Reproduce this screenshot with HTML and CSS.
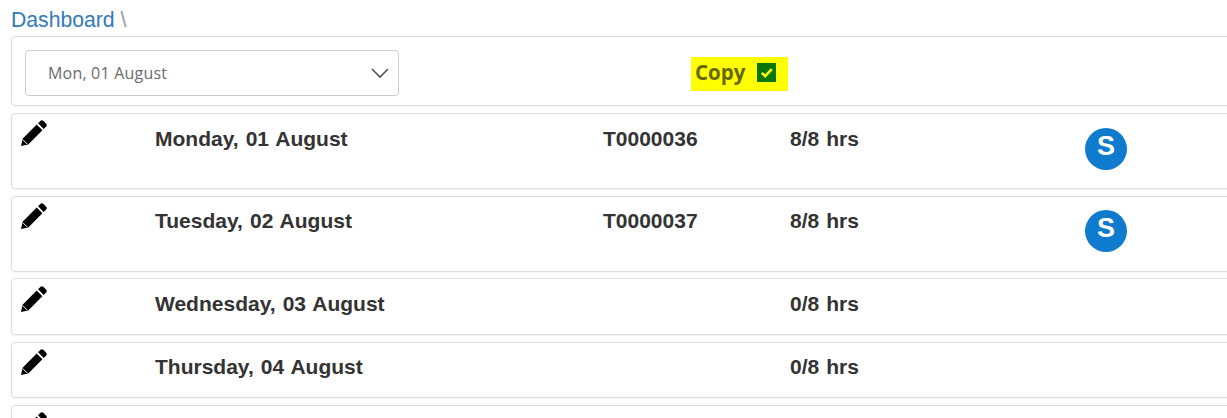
FILE: index.html
```html
<!DOCTYPE html>
<html lang="en">
<head>
    <meta charset="UTF-8">
    <title>Dashboard</title>
    <link rel="stylesheet" href="styles.css">
</head>
<body>
<div class="crumb"><a href="#">Dashboard</a> <span>\</span></div>

<div class="toolbar">
    <div class="select">
        <span>Mon, 01 August</span>
        <svg class="chevron" viewBox="0 0 18 11"><path d="M1 1l8 8 8-8" fill="none" stroke="#555" stroke-width="1.6"/></svg>
    </div>
    <div class="copy">
        <span>Copy</span>
        <span class="check"><svg viewBox="0 0 19 19"><path d="M4.8 9.8l3.4 3.4L14.8 6.2" fill="none" stroke="#ffff00" stroke-width="2.6"/></svg></span>
    </div>
</div>

<div class="row tall">
    <svg class="pencil" viewBox="0 0 26 26"><path d="M0 26l1.6-7.3L15.7 4.6l5.7 5.7L7.3 24.4zM17 3.3L19.6.8c.8-.8 1.9-.8 2.7 0l2.9 2.9c.8.8.8 1.9 0 2.7l-2.5 2.6z"/><path d="M1.8 19.6l4.6 4.6" stroke="#fff" stroke-width="1"/></svg>
    <div class="date">Monday, 01 August</div>
    <div class="task">T0000036</div>
    <div class="hours">8/8 hrs</div>
    <div class="avatar">S</div>
</div>
<div class="row tall">
    <svg class="pencil" viewBox="0 0 26 26"><path d="M0 26l1.6-7.3L15.7 4.6l5.7 5.7L7.3 24.4zM17 3.3L19.6.8c.8-.8 1.9-.8 2.7 0l2.9 2.9c.8.8.8 1.9 0 2.7l-2.5 2.6z"/><path d="M1.8 19.6l4.6 4.6" stroke="#fff" stroke-width="1"/></svg>
    <div class="date">Tuesday, 02 August</div>
    <div class="task">T0000037</div>
    <div class="hours">8/8 hrs</div>
    <div class="avatar">S</div>
</div>
<div class="row">
    <svg class="pencil" viewBox="0 0 26 26"><path d="M0 26l1.6-7.3L15.7 4.6l5.7 5.7L7.3 24.4zM17 3.3L19.6.8c.8-.8 1.9-.8 2.7 0l2.9 2.9c.8.8.8 1.9 0 2.7l-2.5 2.6z"/><path d="M1.8 19.6l4.6 4.6" stroke="#fff" stroke-width="1"/></svg>
    <div class="date">Wednesday, 03 August</div>
    <div class="task"></div>
    <div class="hours">0/8 hrs</div>
</div>
<div class="row">
    <svg class="pencil" viewBox="0 0 26 26"><path d="M0 26l1.6-7.3L15.7 4.6l5.7 5.7L7.3 24.4zM17 3.3L19.6.8c.8-.8 1.9-.8 2.7 0l2.9 2.9c.8.8.8 1.9 0 2.7l-2.5 2.6z"/><path d="M1.8 19.6l4.6 4.6" stroke="#fff" stroke-width="1"/></svg>
    <div class="date">Thursday, 04 August</div>
    <div class="task"></div>
    <div class="hours">0/8 hrs</div>
</div>
<div class="row">
    <svg class="pencil" viewBox="0 0 26 26"><path d="M0 26l1.6-7.3L15.7 4.6l5.7 5.7L7.3 24.4zM17 3.3L19.6.8c.8-.8 1.9-.8 2.7 0l2.9 2.9c.8.8.8 1.9 0 2.7l-2.5 2.6z"/><path d="M1.8 19.6l4.6 4.6" stroke="#fff" stroke-width="1"/></svg>
</div>
</body>
</html>
```

FILE: styles.css
```css
* {
    margin: 0;
    padding: 0;
    box-sizing: border-box;
}

html, body {
    height: 418px;
    overflow: hidden;
}

body {
    width: 1260px;
    padding: 9px 0 0 11px;
    background-color: #fff;
    font-family: "Liberation Sans", Arial, sans-serif;
    color: #333;
}

.crumb {
    height: 27px;
    font-size: 21.2px;
    line-height: 22px;
}

.crumb a {
    color: #337ab7;
    text-decoration: none;
}

.crumb span {
    color: #999;
}

.toolbar {
    display: flex;
    align-items: flex-start;
    height: 70px;
    margin-bottom: 7px;
    padding: 13px 0 0 13px;
    border: 1px solid #ddd;
    border-radius: 4px;
    box-shadow: 0 1px 1px rgba(0, 0, 0, .05);
}

.select {
    display: flex;
    align-items: center;
    justify-content: space-between;
    width: 374px;
    height: 46px;
    padding: 0 9px 0 22px;
    border: 1px solid #ccc;
    border-radius: 4px;
    font-family: "Open Sans", sans-serif;
    font-size: 16px;
    letter-spacing: .2px;
    color: #6b6b6b;
}

.chevron {
    width: 18px;
    height: 11px;
}

.copy {
    display: flex;
    align-items: center;
    gap: 12px;
    width: 97px;
    height: 34px;
    margin: 7px 0 0 292px;
    padding: 0 0 4px 4px;
    background-color: #ff0;
    font-family: "Open Sans", sans-serif;
    font-size: 20.5px;
    font-weight: 700;
    color: #666600;
}

.check {
    display: block;
    width: 19px;
    height: 19px;
    background-color: #0a750a;
}

.check svg {
    display: block;
}

.row {
    display: grid;
    grid-template-columns: 134px 448px 187px 295px 42px;
    align-items: start;
    height: 56.4px;
    margin-bottom: 7px;
    padding: 5.8px 0 0 9px;
    border: 1px solid #ddd;
    border-radius: 4px;
    box-shadow: 0 1px 1px rgba(0, 0, 0, .05);
    font-size: 21px;
    font-weight: 700;
    word-spacing: 1.2px;
    line-height: 38px;
}

.row.tall {
    height: 76px;
    margin-bottom: 6.6px;
}

.pencil {
    width: 26px;
    height: 26px;
    margin-top: .6px;
}

.avatar {
    width: 42px;
    height: 42px;
    margin-top: 8px;
    border-radius: 50%;
    background-color: #0f7bce;
    color: #fff;
    font-size: 27px;
    line-height: 37px;
    text-align: center;
}
```
